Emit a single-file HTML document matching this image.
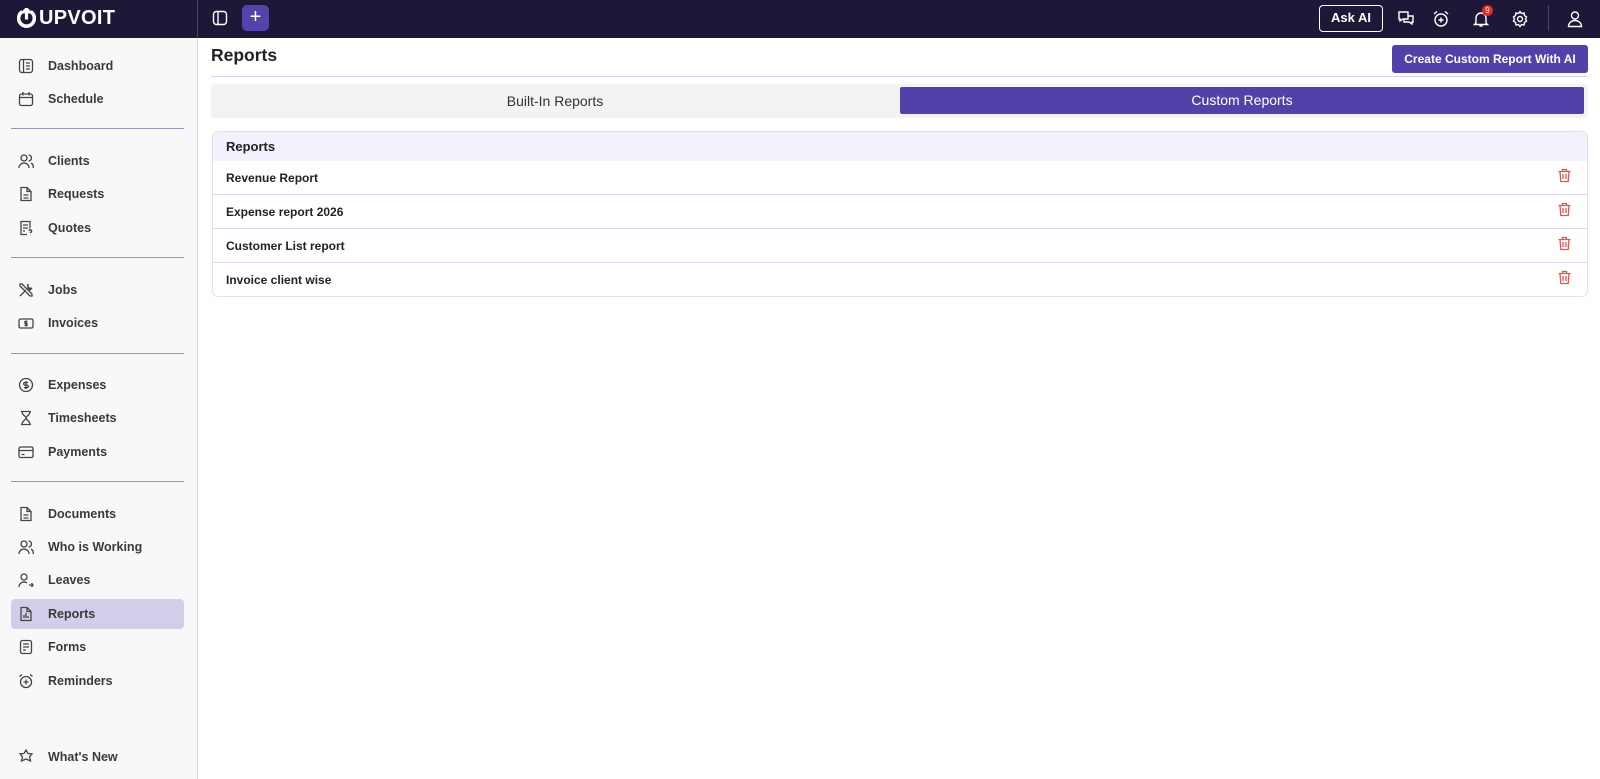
<!DOCTYPE html>
<html><head><meta charset="utf-8"><style>
*{box-sizing:border-box;margin:0;padding:0}
body{width:1600px;height:779px;overflow:hidden;background:#fff;font-family:"Liberation Sans",sans-serif;color:#222;position:relative}
.top{position:absolute;left:0;top:0;width:1600px;height:38px;background:#1d1838}
.side{position:absolute;left:0;top:38px;width:198px;height:741px;background:#f8f8f8;border-right:1px solid #d8d5ea}
.vl{position:absolute;left:197px;top:0;width:1px;height:38px;background:#4a4466}
.logo{position:absolute;left:17px;top:7px;color:#fff;font-weight:bold;font-size:20px;letter-spacing:.3px;display:flex;align-items:center;gap:3px}
.nav{position:absolute;left:0;height:30px;width:198px;display:flex;align-items:center;font-size:12.5px;font-weight:bold;color:#3a3a3a}
.nav svg{position:absolute;left:18px}
.nav span{position:absolute;left:48px}
.hl{position:absolute;left:11px;top:599px;width:173px;height:30px;background:#d3cdea;border-radius:4px}
.div{position:absolute;left:11px;width:173px;height:1px;background:#9a93c0}
.ic{position:absolute;top:10px}
.row{height:34px;border-bottom:1px solid #dcd8ef;padding-left:13px;font-size:12px;font-weight:bold;line-height:34px}
</style></head><body>
<div class="top">
 <div class="logo"><svg width="19" height="21" viewBox="0 0 18 20"><path d="M5 3.5A7.5 7.5 0 1 0 13 3.5" fill="none" stroke="#fff" stroke-width="3.4"/><path d="M9 1v10M5.5 4.5L9 1l3.5 3.5" fill="none" stroke="#fff" stroke-width="3"/></svg>UPVOIT</div>
 <div class="vl"></div>
 <svg class="ic" style="left:212px" width="16" height="16" viewBox="0 0 16 16" fill="none" stroke="#fff" stroke-width="1.4"><rect x="1.5" y="1.5" width="13" height="13" rx="3"/><path d="M6 1.5v13"/></svg>
 <div style="position:absolute;left:242px;top:5px;width:27px;height:26px;background:#5443ab;border-radius:5px;color:#fff;font-size:20px;text-align:center;line-height:25px">+</div>
 <div style="position:absolute;left:1319px;top:5px;width:64px;height:27px;border:1.5px solid #fff;border-radius:4px;color:#fff;font-weight:bold;font-size:13px;text-align:center;line-height:24px">Ask AI</div>
 <svg class="ic" style="left:1397px" width="18" height="18" viewBox="0 0 18 18" fill="none" stroke="#fff" stroke-width="1.4"><path d="M2 2h9v7H6l-3 2V9H2z"/><path d="M7 9v3h5l3 2v-2h1V6h-5"/></svg>
 <svg class="ic" style="left:1432px" width="18" height="18" viewBox="0 0 18 18" fill="none" stroke="#fff" stroke-width="1.4"><circle cx="9" cy="10" r="6"/><path d="M9 7.5v5M6.5 10h5M2 4l3-2.5M16 4l-3-2.5"/></svg>
 <svg class="ic" style="left:1472px" width="18" height="18" viewBox="0 0 18 18" fill="none" stroke="#fff" stroke-width="1.4"><path d="M4 13V8a5 5 0 0 1 10 0v5l1.5 1.5h-13zM7.5 16h3"/></svg>
 <div style="position:absolute;left:1482px;top:5px;width:11px;height:11px;border-radius:50%;background:#e8261e;color:#fff;font-size:8px;text-align:center;line-height:11px">9</div>
 <svg class="ic" style="left:1511px" width="18" height="18" viewBox="0 0 18 18" fill="none" stroke="#fff" stroke-width="1.4"><circle cx="9" cy="9" r="2.5"/><path d="M9 1.5l1.5 2 2.5-.5.5 2.5 2 1.5-1 2 1 2-2 1.5-.5 2.5-2.5-.5-1.5 2-1.5-2-2.5.5-.5-2.5-2-1.5 1-2-1-2 2-1.5.5-2.5 2.5.5z"/></svg>
 <div style="position:absolute;left:1548px;top:5px;width:1px;height:26px;background:#4a4466"></div>
 <svg class="ic" style="left:1566px" width="18" height="18" viewBox="0 0 18 18" fill="none" stroke="#fff" stroke-width="1.4"><circle cx="9" cy="5.5" r="3.5"/><path d="M2.5 16.5a6.5 6 0 0 1 13 0z"/></svg>
</div>
<div class="side"></div>
<div class="hl"></div>
<div class="div" style="top:128px"></div><div class="div" style="top:257px"></div><div class="div" style="top:353px"></div><div class="div" style="top:481px"></div>
<div class="nav" style="top:51px"><svg width="16" height="16" viewBox="0 0 16 16" fill="none" stroke="#444" stroke-width="1.3"><rect x="1.5" y="1.5" width="13" height="13" rx="2.5"/><path d="M5.5 1.5v13M8 5h4M8 8h4M8 11h4"/></svg><span>Dashboard</span></div>
<div class="nav" style="top:84px"><svg width="16" height="16" viewBox="0 0 16 16" fill="none" stroke="#444" stroke-width="1.3"><rect x="1.5" y="3" width="13" height="11.5" rx="2"/><path d="M1.5 6.5h13M5 1v3.5M11 1v3.5"/></svg><span>Schedule</span></div>
<div class="nav" style="top:146px"><svg width="16" height="16" viewBox="0 0 16 16" fill="none" stroke="#444" stroke-width="1.3"><circle cx="6" cy="5" r="3"/><path d="M1 15a5 5 0 0 1 10 0M10.5 2a3 3 0 0 1 0 6M13 10a4 4 0 0 1 2 5"/></svg><span>Clients</span></div>
<div class="nav" style="top:179px"><svg width="16" height="16" viewBox="0 0 16 16" fill="none" stroke="#444" stroke-width="1.3"><path d="M3 1.5h6l4 4v9H3zM9 1.5v4h4M5.5 9h5M5.5 12h5"/></svg><span>Requests</span></div>
<div class="nav" style="top:213px"><svg width="16" height="16" viewBox="0 0 16 16" fill="none" stroke="#444" stroke-width="1.3"><path d="M9 14.5H3v-13h9v7M5 5h5M5 8h5M5 11h2M11 11a1.3 1.3 0 1 1 1.5 1.3v1M12.5 15v.3"/></svg><span>Quotes</span></div>
<div class="nav" style="top:275px"><svg width="16" height="16" viewBox="0 0 16 16" fill="none" stroke="#444" stroke-width="1.3"><path d="M2 14l6-6M10 2a3 3 0 0 0 4 4l-2 2-2-2zM2 2l2 0 8 8 2 2v2h-2l-2-2-8-8z"/></svg><span>Jobs</span></div>
<div class="nav" style="top:308px"><svg width="16" height="16" viewBox="0 0 16 16" fill="none" stroke="#444" stroke-width="1.3"><rect x="1" y="4" width="14" height="9" rx="1.5"/><path d="M9.5 6.5h-2.5v2h2v2H6.5M8 5.5v6"/></svg><span>Invoices</span></div>
<div class="nav" style="top:370px"><svg width="16" height="16" viewBox="0 0 16 16" fill="none" stroke="#444" stroke-width="1.3"><circle cx="8" cy="8" r="6.5"/><path d="M10 5.5H7a1.3 1.3 0 0 0 0 2.6h2a1.3 1.3 0 0 1 0 2.6H6M8 4v8"/></svg><span>Expenses</span></div>
<div class="nav" style="top:403px"><svg width="16" height="16" viewBox="0 0 16 16" fill="none" stroke="#444" stroke-width="1.3"><path d="M3 1.5h10M3 14.5h10M4 1.5c0 4 4 4.5 4 6.5s-4 2.5-4 6.5M12 1.5c0 4-4 4.5-4 6.5s4 2.5 4 6.5"/></svg><span>Timesheets</span></div>
<div class="nav" style="top:437px"><svg width="16" height="16" viewBox="0 0 16 16" fill="none" stroke="#444" stroke-width="1.3"><rect x="1" y="3" width="14" height="10.5" rx="1.5"/><path d="M1 6.5h14M3.5 10.5h3"/></svg><span>Payments</span></div>
<div class="nav" style="top:499px"><svg width="16" height="16" viewBox="0 0 16 16" fill="none" stroke="#444" stroke-width="1.3"><path d="M3 1.5h6l4 4v9H3zM9 1.5v4h4M5.5 9h5M5.5 12h5"/></svg><span>Documents</span></div>
<div class="nav" style="top:532px"><svg width="16" height="16" viewBox="0 0 16 16" fill="none" stroke="#444" stroke-width="1.3"><circle cx="6" cy="5" r="3"/><path d="M1 15a5 5 0 0 1 10 0M10.5 2a3 3 0 0 1 0 6M13 10a4 4 0 0 1 2 5"/></svg><span>Who is Working</span></div>
<div class="nav" style="top:565px"><svg width="16" height="16" viewBox="0 0 16 16" fill="none" stroke="#444" stroke-width="1.3"><circle cx="6" cy="5" r="3"/><path d="M1 15a5 5 0 0 1 8-4M11 13h4M13.5 11l1.5 2-1.5 2"/></svg><span>Leaves</span></div>
<div class="nav" style="top:599px"><svg width="16" height="16" viewBox="0 0 16 16" fill="none" stroke="#444" stroke-width="1.3"><path d="M3 1.5h6l4 4v9H3zM9 1.5v4h4M6 12V9M8 12V7M10 12v-2"/></svg><span>Reports</span></div>
<div class="nav" style="top:632px"><svg width="16" height="16" viewBox="0 0 16 16" fill="none" stroke="#444" stroke-width="1.3"><rect x="2.5" y="1.5" width="11" height="13" rx="2"/><path d="M5 5h6M5 8h6M5 11h3"/></svg><span>Forms</span></div>
<div class="nav" style="top:666px"><svg width="16" height="16" viewBox="0 0 16 16" fill="none" stroke="#444" stroke-width="1.3"><circle cx="8" cy="9" r="5.5"/><path d="M8 6.5v5M5.5 9h5M1.5 3.5l2.5-2M14.5 3.5l-2.5-2"/></svg><span>Reminders</span></div>
<div class="nav" style="top:742px"><svg width="16" height="16" viewBox="0 0 16 16" fill="none" stroke="#444" stroke-width="1.3"><path d="M8 1l2 3.5 4 .3-2.5 3.2 1 4-4.5-2-4.5 2 1-4L2 4.8l4-.3z"/></svg><span>What's New</span></div>

<div style="position:absolute;left:211px;top:45px;font-size:17.5px;font-weight:bold;color:#222">Reports</div>
<div style="position:absolute;left:1392px;top:45px;width:196px;height:28px;background:#5241a8;border-radius:3px;color:#fff;font-size:12px;font-weight:bold;text-align:center;line-height:28px">Create Custom Report With AI</div>
<div style="position:absolute;left:211px;top:76px;width:1377px;height:1px;background:#d5d0ee"></div>
<div style="position:absolute;left:211px;top:84px;width:1377px;height:34px;background:#f3f3f3;border-radius:3px"></div>
<div style="position:absolute;left:211px;top:84px;width:688px;height:34px;font-size:14px;color:#333;text-align:center;line-height:34px">Built-In Reports</div>
<div style="position:absolute;left:900px;top:87px;width:684px;height:27px;background:#5241a8;border-radius:2px;color:#fff;font-size:14px;text-align:center;line-height:27px">Custom Reports</div>
<div style="position:absolute;left:212px;top:131px;width:1376px;height:166px;border:1px solid #e2e0ec;border-radius:6px;overflow:hidden">
 <div style="height:29px;background:#f3f1fc;padding-left:13px;font-size:13px;font-weight:bold;line-height:29px">Reports</div>
 <div class="row">Revenue Report</div>
 <div class="row">Expense report 2026</div>
 <div class="row">Customer List report</div>
 <div class="row" style="border:none">Invoice client wise</div>
</div>
<svg style="position:absolute;left:1557px;top:168px" width="15" height="15" viewBox="0 0 15 15" fill="none" stroke="#e5534b" stroke-width="1.3"><path d="M1.5 3.5h12M5.5 3.5V1.5h4v2M3 3.5l.8 10h7.4l.8-10M6 6v5M9 6v5"/></svg>
<svg style="position:absolute;left:1557px;top:202px" width="15" height="15" viewBox="0 0 15 15" fill="none" stroke="#e5534b" stroke-width="1.3"><path d="M1.5 3.5h12M5.5 3.5V1.5h4v2M3 3.5l.8 10h7.4l.8-10M6 6v5M9 6v5"/></svg>
<svg style="position:absolute;left:1557px;top:236px" width="15" height="15" viewBox="0 0 15 15" fill="none" stroke="#e5534b" stroke-width="1.3"><path d="M1.5 3.5h12M5.5 3.5V1.5h4v2M3 3.5l.8 10h7.4l.8-10M6 6v5M9 6v5"/></svg>
<svg style="position:absolute;left:1557px;top:270px" width="15" height="15" viewBox="0 0 15 15" fill="none" stroke="#e5534b" stroke-width="1.3"><path d="M1.5 3.5h12M5.5 3.5V1.5h4v2M3 3.5l.8 10h7.4l.8-10M6 6v5M9 6v5"/></svg>
</body></html>
